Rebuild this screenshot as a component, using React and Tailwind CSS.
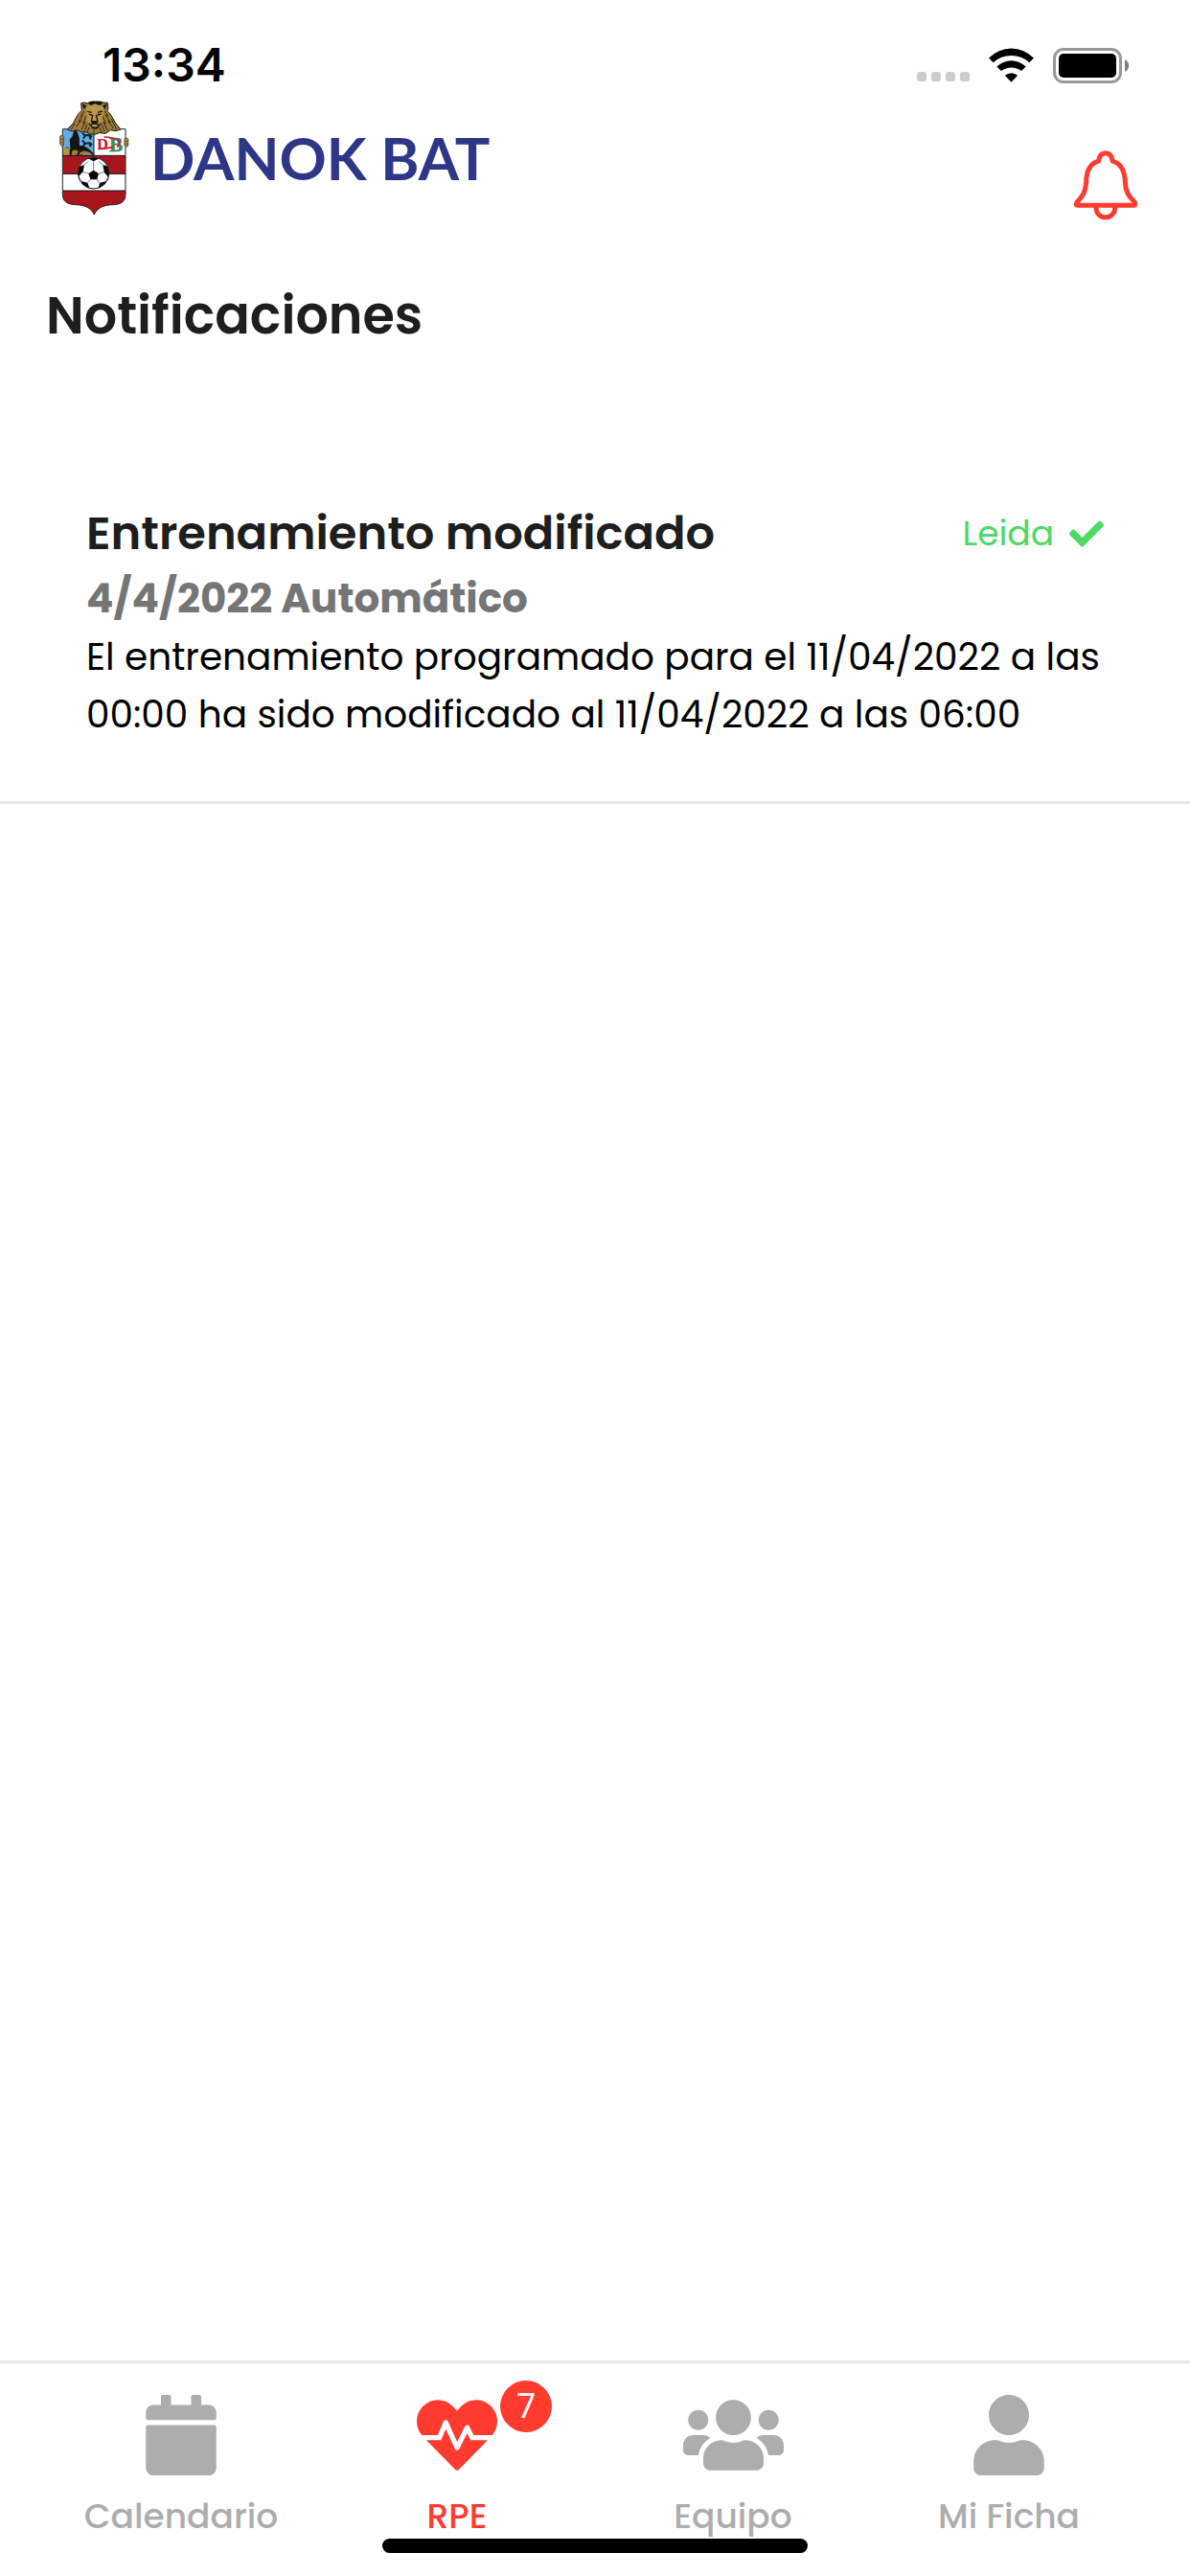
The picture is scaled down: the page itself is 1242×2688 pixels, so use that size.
import React from "react";
import { FaCalendar, FaCheck, FaHeartbeat, FaUser, FaUsers } from "react-icons/fa";

function StatusBar() {
  return (
    <div className="flex h-[104px] items-center justify-between pt-[34px] pr-[64px] pb-[2px] pl-[107px]">
      <span className="font-['Inter',sans-serif] text-[48px] leading-[60px] font-semibold text-black">13:34</span>
      <div className="flex items-center gap-[20px]">
        <div className="flex gap-[5px] self-end pb-[2px]">
          {[0, 1, 2, 3].map((dot) => (
            <span key={dot} className="size-[10px] rounded-[3px] bg-[#cccccc]" />
          ))}
        </div>
        <svg viewBox="336 87 142 109" className="h-[36px] w-[47px]" aria-hidden="true">
          <path d="M336 119A98 98 0 0 1 478 119L464 133A85 85 0 0 0 350 133Z" />
          <path d="M361 146A66 66 0 0 1 453 146L439 160A52 52 0 0 0 375 160Z" />
          <path d="M387 174A30 30 0 0 1 427 174L407 195Z" />
        </svg>
        <svg viewBox="0 0 79 37" className="h-[37px] w-[79px]" aria-hidden="true">
          <rect x="1.5" y="1.5" width="69" height="34" rx="9.5" fill="none" stroke="#999" strokeWidth="3" />
          <rect x="6" y="6" width="60" height="25" rx="5" />
          <path d="M75 12Q79 14 79 18.500T75 25Z" fill="#808080" />
        </svg>
      </div>
    </div>
  );
}

function Crest() {
  return (
    <svg viewBox="60 42 231 366" className="h-[122px] w-[77px]" role="img" aria-label="Escudo">
      <defs>
        <clipPath id="shield">
          <path d="M76 134H273V338C273 362 258 370 232 371C202 372 184 382 175 402C166 382 148 372 118 371C92 370 76 362 76 338Z" />
        </clipPath>
        <clipPath id="ball">
          <circle cx="173" cy="272" r="49" />
        </clipPath>
      </defs>
      <g clipPath="url(#shield)">
        <rect x="70" y="130" width="210" height="280" fill="#fff" />
        <rect x="76" y="134" width="98" height="84" fill="#62aee6" />
        <path d="M76 197L90 190L100 197L105 165H128V185Q150 184 173 210V218H76Z" fill="#181410" />
        <path d="M76 208V198L84 192L98 195V218H76Z" fill="#b79545" />
        <path d="M98 166L106 158L110 145L116 133L123 145L128 160V194H120V176Q114 168 108 177V193H100Z" fill="#151515" />
        <path d="M106 202Q116 196 125 203L120 218H103ZM126 215Q140 190 172 215Z" fill="#9d7f39" />
        <path d="M136 218Q150 201 170 218Z" fill="#6497bb" />
        <g fill="none" stroke="#14202c" strokeWidth="6" strokeLinecap="round">
          <path d="M139 148L146 154L160 153L166 157M146 155L142 162M160 154L163 164M139 171L146 179L161 178L167 182M146 180L141 187M160 179L163 188" />
        </g>
        <rect x="70" y="217" width="210" height="57" fill="#a9151c" />
        <rect x="70" y="327" width="210" height="80" fill="#a9151c" />
        <path d="M70 217H280M70 274H280M70 327H280M174 130V217" stroke="#17151b" strokeWidth="3" />
      </g>
      <path d="M76 134H273V338C273 362 258 370 232 371C202 372 184 382 175 402C166 382 148 372 118 371C92 370 76 362 76 338Z" fill="none" stroke="#25212a" strokeWidth="3" />
      <g fontFamily="Liberation Serif, serif" fontWeight="700">
        <text x="183" y="197" fontSize="50" fill="#ce1835">D</text>
        <text x="222" y="205" fontSize="64" fill="#399555" stroke="#285b38" strokeWidth="1">B</text>
        <path d="M189 196Q221 194 234 190M205 159Q239 159 254 174Q256 184 246 190" fill="none" stroke="#ce1835" strokeWidth="5" />
      </g>
      <path d="M68 156Q76 150 80 158L79 184Q70 190 68 180ZM270 164Q276 158 282 166L281 187Q272 194 269 183Z" fill="#ad8b4b" stroke="#352816" strokeWidth="2" />
      <path d="M69 166H77M69 176H77M272 173H281M272 181H281" stroke="#352816" strokeWidth="2" />
      <path d="M134 53L142 51L154 53L166 48L194 48L207 52L216 51L219 67L216 77L228 91L242 116L258 135L243 140L226 137L211 148L190 146L178 151L160 149L151 143L134 143L121 137L106 141L91 135L109 116L124 88L136 76Z" fill="#9c7c3a" stroke="#19150f" strokeWidth="3" strokeLinejoin="round" />
      <path d="M150 64L163 57H191L205 66L201 102L190 127L176 135L160 127L152 104Z" fill="#b9954d" />
      <path d="M137 55L151 61L144 73ZM201 61L215 55L209 73ZM155 53L164 48H196L201 55L190 60L178 54L165 60Z" fill="#15120e" />
      <path d="M153 79L167 82M186 82L200 78M158 88L169 90M184 90L197 87M170 90L166 111L175 116L186 111L181 90M163 121Q176 113 190 121M158 116Q176 144 197 116M166 128Q177 137 188 128" fill="none" stroke="#1b1711" strokeWidth="4" />
      <path d="M167 108H185L180 117H172Z" fill="#1b1711" />
      <path d="M143 78L133 94L139 91L126 111L134 107L118 127M150 92L140 117L147 112L135 136M153 119L145 139M159 128L153 145M207 77L218 93L211 91L226 113L218 109L236 132M202 94L211 117L204 113L217 138M200 121L207 142M193 129L197 145M174 137V149M114 116L103 135M229 102L245 135" fill="none" stroke="#33270f" strokeWidth="3" />
      <circle cx="173" cy="272" r="49" fill="#fff" />
      <g clipPath="url(#ball)">
        <path d="M173 263L189 273L184 292H163L157 273ZM154 225L173 235L193 225L185 217H162ZM124 253L144 246L140 268L126 282L118 270ZM202 246L223 252L228 278L218 283L206 269ZM135 297L154 302L161 321L139 318ZM192 303L213 297L207 317L187 321Z" fill="#080808" />
        <path d="M173 235V263M144 246L157 235M202 246L189 235M140 268L157 273M206 269L189 273M163 292L154 302M184 292L192 303M126 282L135 297M218 283L213 297M161 321H187" stroke="#333" strokeWidth="2" />
      </g>
      <circle cx="173" cy="272" r="49" fill="none" stroke="#222" strokeWidth="3" />
    </svg>
  );
}

function Bell() {
  return (
    <svg viewBox="594 408 205 225" className="h-[75px] w-[68px]" fill="none" stroke="#ff3b30" strokeWidth="15" strokeLinejoin="round" aria-hidden="true">
      <path d="M608 583H785C792 583 789 574 784 569C772 556 759 544 758 512C757 478 748 452 718 444C716 428 708 419 696 419C684 419 676 428 674 444C645 452 635 478 635 512C633 544 622 556 610 569C603 575 601 583 608 583Z" />
      <path d="M666 588C666 632 726 632 726 588" />
    </svg>
  );
}

const tabs = [
  { label: "Calendario", Icon: FaCalendar, size: "h-[84px] w-[74px]" },
  { label: "RPE", Icon: FaHeartbeat, size: "h-[84px] w-[84px]", active: true, badge: 7 },
  { label: "Equipo", Icon: FaUsers, size: "h-[84px] w-[105px]" },
  { label: "Mi Ficha", Icon: FaUser, size: "h-[84px] w-[74px]" },
];

export default function App() {
  return (
    <div className="flex min-h-screen flex-col bg-white font-['Poppins','Inter',sans-serif]">
      <StatusBar />
      <header className="flex items-start justify-between pr-[54px] pl-[60px]">
        <div className="flex items-center gap-[20px]">
          <Crest />
          <span className="font-['Lato',sans-serif] text-[61px] leading-[80px] font-bold text-[#2e3687]">DANOK BAT</span>
        </div>
        <button type="button" aria-label="Notificaciones" className="mt-[52px]">
          <Bell />
        </button>
      </header>

      <main className="flex-1">
        <h1 className="mt-[58px] px-[48px] text-[54px] leading-[80px] font-semibold text-[#1e1e1e]">Notificaciones</h1>
        <article className="mt-[152px] border-b-[3px] border-[#e8e8e8] px-[90px] pb-[60px]">
          <div className="flex items-center justify-between">
            <h2 className="text-[48px] leading-[72px] font-semibold text-[#1e1e1e]">Entrenamiento modificado</h2>
            <span className="flex items-center gap-[16px] text-[36px] leading-[54px] text-[#4cd964]">
              Leida
              <FaCheck className="size-[36px]" />
            </span>
          </div>
          <p className="text-[42px] leading-[63px] font-bold text-[#757575]">4/4/2022 Automático</p>
          <p className="text-[39px] leading-[60px] text-black">
            El entrenamiento programado para el 11/04/2022 a las 00:00 ha sido modificado al 11/04/2022 a las 06:00
          </p>
        </article>
      </main>

      <nav className="relative grid h-[225px] grid-cols-4 border-t-[3px] border-[#e8e8e8] px-[45px] pt-[33px]">
        {tabs.map(({ label, Icon, size, active, badge }) => (
          <button
            key={label}
            type="button"
            className={active ? "flex flex-col items-center text-[#ff3b30]" : "flex flex-col items-center text-[#adadad]"}
          >
            <span className="relative">
              <Icon className={size} />
              {badge && (
                <span className="absolute -top-[15px] left-[87px] flex size-[54px] items-center justify-center rounded-full bg-[#ff3b30] text-[36px] leading-[54px] text-white">
                  {badge}
                </span>
              )}
            </span>
            <span className="mt-[16px] text-[36px] leading-[54px] font-medium">{label}</span>
          </button>
        ))}
        <div className="absolute bottom-[24px] left-1/2 h-[15px] w-[444px] -translate-x-1/2 rounded-full bg-black" />
      </nav>
    </div>
  );
}
